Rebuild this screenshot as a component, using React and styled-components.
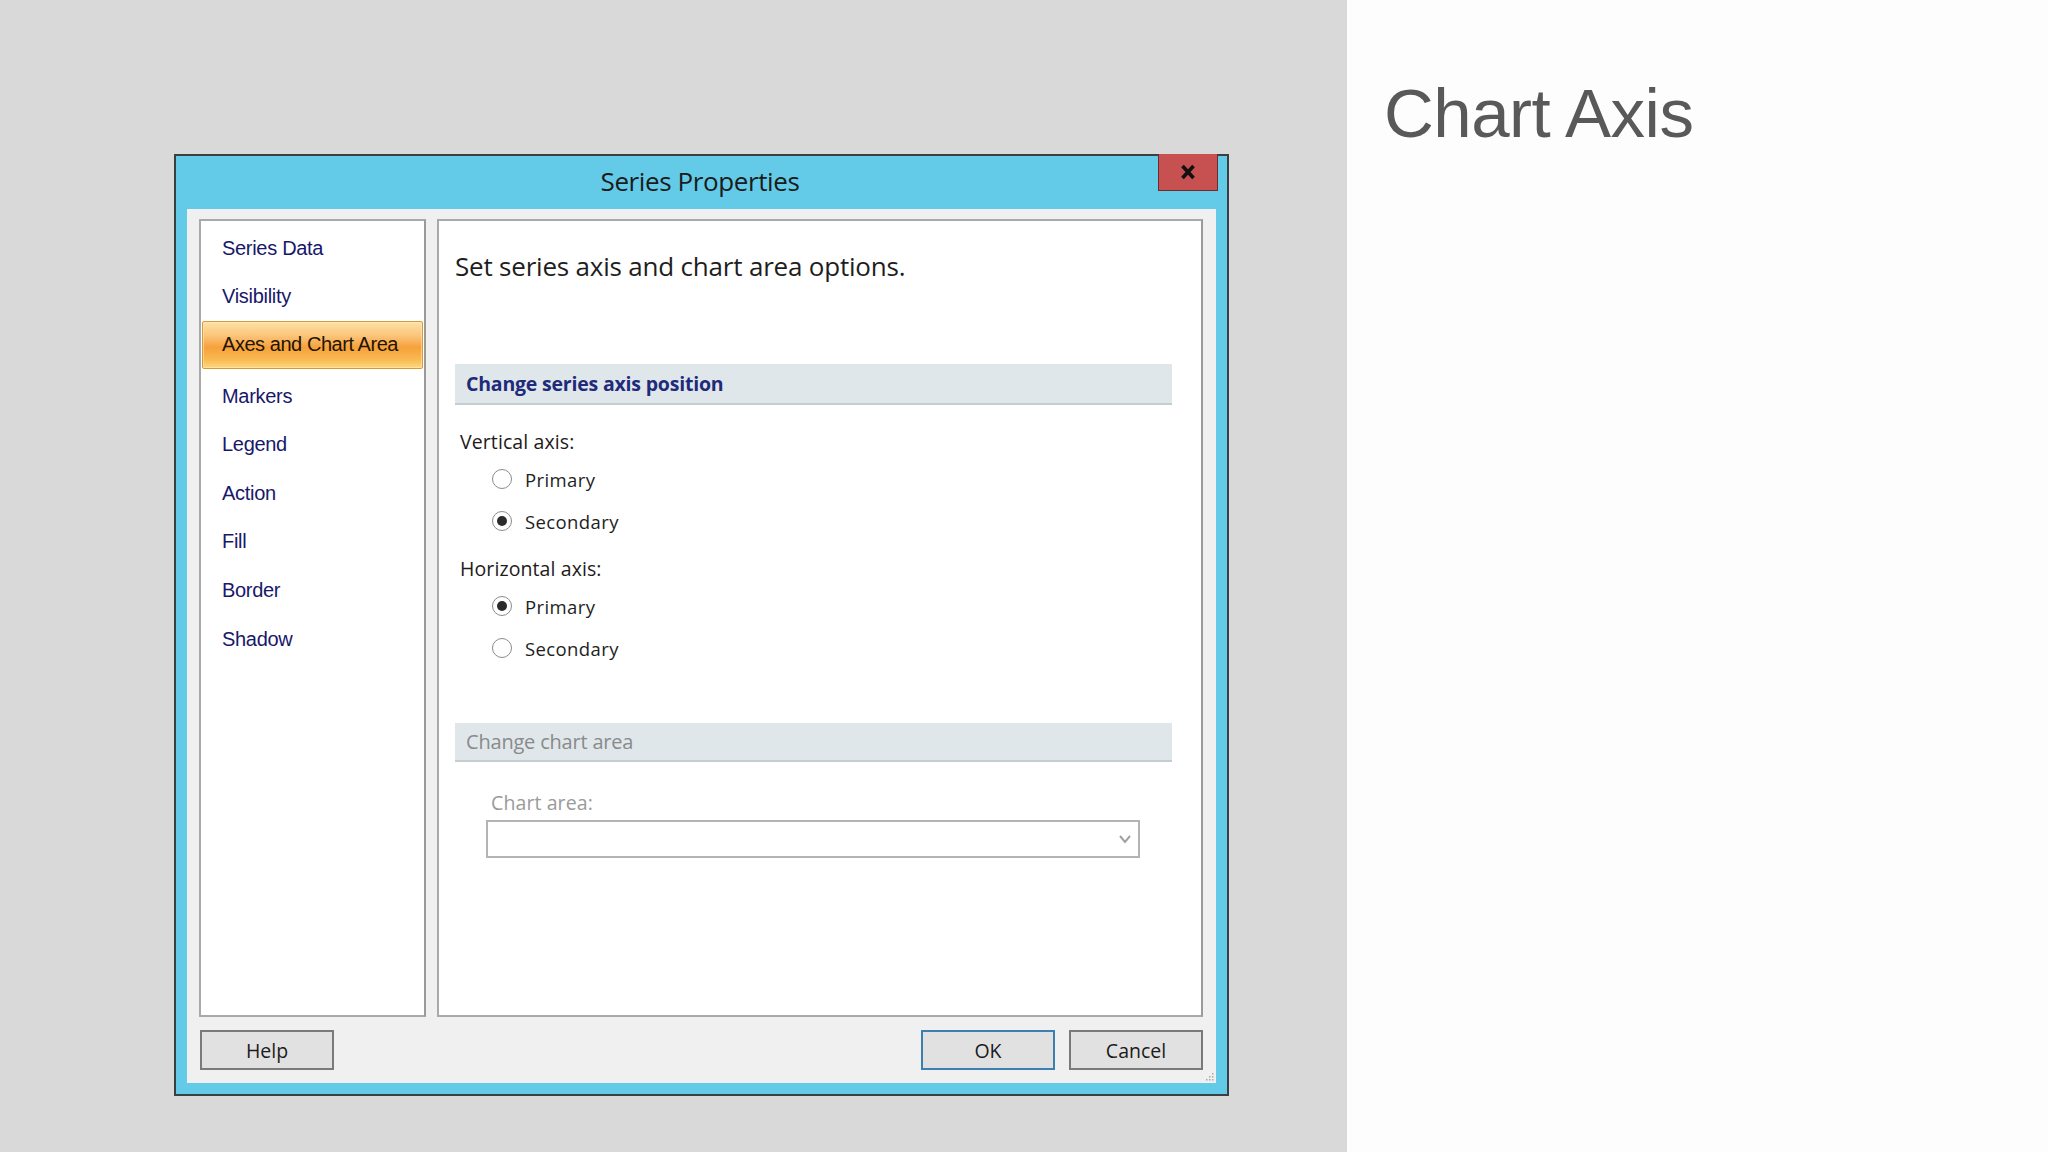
import React from "react";
import styled, { createGlobalStyle } from "styled-components";

const Global = createGlobalStyle`
  html, body { margin: 0; padding: 0; }
  body { width: 2048px; height: 1152px; overflow: hidden; background: #d9d9d9; }
  #root { width: 2048px; height: 1152px; }
`;

const Page = styled.div`
  display: flex;
  width: 2048px;
  height: 1152px;
`;

const Stage = styled.div`
  width: 1347px;
  flex-shrink: 0;
  background: #d9d9d9;
  padding: 154px 0 0 174px;
  box-sizing: border-box;
`;

const Side = styled.div`
  flex: 1;
  background: #fdfdfd;
  padding: 74px 0 0 37px;
  box-sizing: border-box;
`;

const SlideTitle = styled.h1`
  margin: 0;
  font-family: "Liberation Sans", Arial, sans-serif;
  font-weight: 400;
  font-size: 69px;
  line-height: 80px;
  letter-spacing: -0.5px;
  color: #595959;
`;

const Dialog = styled.div`
  width: 1055px;
  height: 942px;
  box-sizing: border-box;
  background: #63cbe8;
  border: 2px solid #3a3f42;
  display: flex;
  flex-direction: column;
  font-family: "Open Sans", "Noto Sans", sans-serif;
`;

const TitleBar = styled.div`
  height: 53px;
  display: grid;
  grid-template-columns: 1fr auto 1fr;
  align-items: start;
  padding-right: 9px;
`;

const TitleText = styled.div`
  grid-column: 2;
  padding-left: 6px;
  font-size: 26px;
  line-height: 50px;
  letter-spacing: -0.4px;
  color: #1b1b1b;
`;

const CloseButton = styled.div`
  grid-column: 3;
  justify-self: end;
  width: 60px;
  height: 37px;
  margin-top: -2px;
  box-sizing: border-box;
  background: #c75050;
  border: 1px solid #6b2d2d;
  border-top: none;
  display: flex;
  align-items: center;
  justify-content: center;
`;

const Body = styled.div`
  position: relative;
  flex: 1;
  margin: 0 11px 11px 11px;
  background: #f0f0f0;
  padding: 10px 13px 13px 12px;
  display: grid;
  grid-template-columns: 227px 1fr;
  grid-template-rows: 1fr 40px;
  column-gap: 11px;
  row-gap: 13px;
`;

const NavPanel = styled.div`
  background: #fff;
  border: 2px solid #a9a9a9;
  border-right-color: #9a9a9a;
  padding-top: 3px;
  display: flex;
  flex-direction: column;
`;

const NavItem = styled.div`
  height: 48.6px;
  margin: 0 1px;
  padding-left: 20px;
  display: flex;
  align-items: center;
  font-family: "Liberation Sans", Arial, sans-serif;
  font-size: 20px;
  letter-spacing: -0.3px;
  color: #18186a;
  ${(p) =>
    p.$active &&
    `
    height: 45.6px;
    margin: 0 1px 3px;
    padding-left: 19px;
    letter-spacing: -0.45px;
    color: #241400;
    border: 1px solid #d59a3a;
    border-radius: 2px;
    background: linear-gradient(#fde2a6 0%, #fbc47a 30%, #f6a13c 55%, #f9b850 80%, #fdd77c 100%);
    box-shadow: inset 0 0 0 1px rgba(255,240,200,0.5);
  `}
`;

const MainPanel = styled.div`
  background: #fff;
  border: 2px solid #a9a9a9;
  border-right-color: #9a9a9a;
  padding: 0 29px 0 16px;
  display: flex;
  flex-direction: column;
`;

const Heading = styled.div`
  margin-top: 28px;
  font-size: 26px;
  line-height: 34px;
  letter-spacing: -0.2px;
  color: #1e1e1e;
`;

const SectionHeader = styled.div`
  margin-top: ${(p) => p.$mt}px;
  height: ${(p) => p.$h}px;
  box-sizing: border-box;
  background: #dfe7eb;
  border-bottom: 2px solid #c5cdd1;
  padding-left: 11px;
  display: flex;
  align-items: center;
  font-size: ${(p) => (p.$disabled ? 20 : 19.5)}px;
  font-weight: ${(p) => (p.$disabled ? 400 : 700)};
  letter-spacing: -0.2px;
  color: ${(p) => (p.$disabled ? "#8a8a8a" : "#1f2b7a")};
`;

const FieldLabel = styled.div`
  margin-top: ${(p) => p.$mt}px;
  margin-left: ${(p) => p.$ml || 5}px;
  height: 28px;
  line-height: 28px;
  font-size: 19.5px;
  letter-spacing: 0.1px;
  color: ${(p) => (p.$disabled ? "#9a9a9a" : "#231a1a")};
`;

const RadioRow = styled.label`
  margin-top: ${(p) => p.$mt || 0}px;
  margin-left: 37px;
  height: 42px;
  display: flex;
  align-items: center;
  gap: 13px;
  font-size: 18.5px;
  letter-spacing: 0.4px;
  color: #1e1e1e;
`;

const RadioCircle = styled.span`
  width: 20px;
  height: 20px;
  box-sizing: border-box;
  border-radius: 50%;
  border: 1.5px solid #8b8b8b;
  background: #fff;
  display: flex;
  align-items: center;
  justify-content: center;
  &::after {
    content: "";
    width: 10px;
    height: 10px;
    border-radius: 50%;
    background: ${(p) => (p.$checked ? "#2b2b2b" : "transparent")};
  }
`;

const Combo = styled.div`
  margin-top: 3px;
  margin-left: 31px;
  width: 654px;
  height: 38px;
  box-sizing: border-box;
  border: 2px solid #b4b4b4;
  background: #fff;
  display: flex;
  align-items: center;
  justify-content: flex-end;
  padding-right: 6px;
`;

const ButtonRow = styled.div`
  grid-column: 1 / 3;
  display: flex;
  align-items: stretch;
  padding-left: 1px;
`;

const Button = styled.div`
  width: 134px;
  box-sizing: border-box;
  background: #e1e1e1;
  border: 2px solid ${(p) => (p.$primary ? "#3c7fb1" : "#7a7a7a")};
  display: flex;
  align-items: center;
  justify-content: center;
  font-size: 19.5px;
  color: #1b1b1b;
  margin-left: ${(p) => p.$ml || 0}px;
`;

const Spacer = styled.div`
  flex: 1;
`;

const Grip = styled.svg`
  position: absolute;
  right: 1px;
  bottom: 1px;
`;

const navItems = [
  "Series Data",
  "Visibility",
  "Axes and Chart Area",
  "Markers",
  "Legend",
  "Action",
  "Fill",
  "Border",
  "Shadow",
];

function Radio({ checked, children, mt }) {
  return (
    <RadioRow $mt={mt}>
      <RadioCircle $checked={checked} />
      {children}
    </RadioRow>
  );
}

export default function App() {
  return (
    <>
      <Global />
      <Page>
        <Stage>
          <Dialog>
            <TitleBar>
              <TitleText>Series Properties</TitleText>
              <CloseButton>
                <svg width="18" height="18" viewBox="0 0 18 18">
                  <path d="M3.5 3 L14.5 15 M14.5 3 L3.5 15" stroke="#111" strokeWidth="3.6" strokeLinecap="butt" />
                </svg>
              </CloseButton>
            </TitleBar>
            <Body>
              <NavPanel>
                {navItems.map((n) => (
                  <NavItem key={n} $active={n === "Axes and Chart Area"}>
                    {n}
                  </NavItem>
                ))}
              </NavPanel>
              <MainPanel>
                <Heading>Set series axis and chart area options.</Heading>
                <SectionHeader $mt={81} $h={41}>Change series axis position</SectionHeader>
                <FieldLabel $mt={23}>Vertical axis:</FieldLabel>
                <Radio mt={2}>Primary</Radio>
                <Radio checked>Secondary</Radio>
                <FieldLabel $mt={13}>Horizontal axis:</FieldLabel>
                <Radio checked mt={2}>Primary</Radio>
                <Radio>Secondary</Radio>
                <SectionHeader $mt={54} $h={39} $disabled>Change chart area</SectionHeader>
                <FieldLabel $mt={27} $ml={36} $disabled>Chart area:</FieldLabel>
                <Combo>
                  <svg width="14" height="10" viewBox="0 0 14 10">
                    <path d="M2 2 L7 8 L12 2" fill="none" stroke="#a0a0a0" strokeWidth="2" />
                  </svg>
                </Combo>
              </MainPanel>
              <ButtonRow>
                <Button>Help</Button>
                <Spacer />
                <Button $primary>OK</Button>
                <Button $ml={14}>Cancel</Button>
              </ButtonRow>
              <Grip width="12" height="12" viewBox="0 0 12 12">
                {[[9, 3], [9, 6], [6, 6], [9, 9], [6, 9], [3, 9]].map(([x, y]) => (
                  <rect key={`${x}-${y}`} x={x} y={y} width="1.5" height="1.5" fill="#a8a8a8" />
                ))}
              </Grip>
            </Body>
          </Dialog>
        </Stage>
        <Side>
          <SlideTitle>Chart Axis</SlideTitle>
        </Side>
      </Page>
    </>
  );
}
